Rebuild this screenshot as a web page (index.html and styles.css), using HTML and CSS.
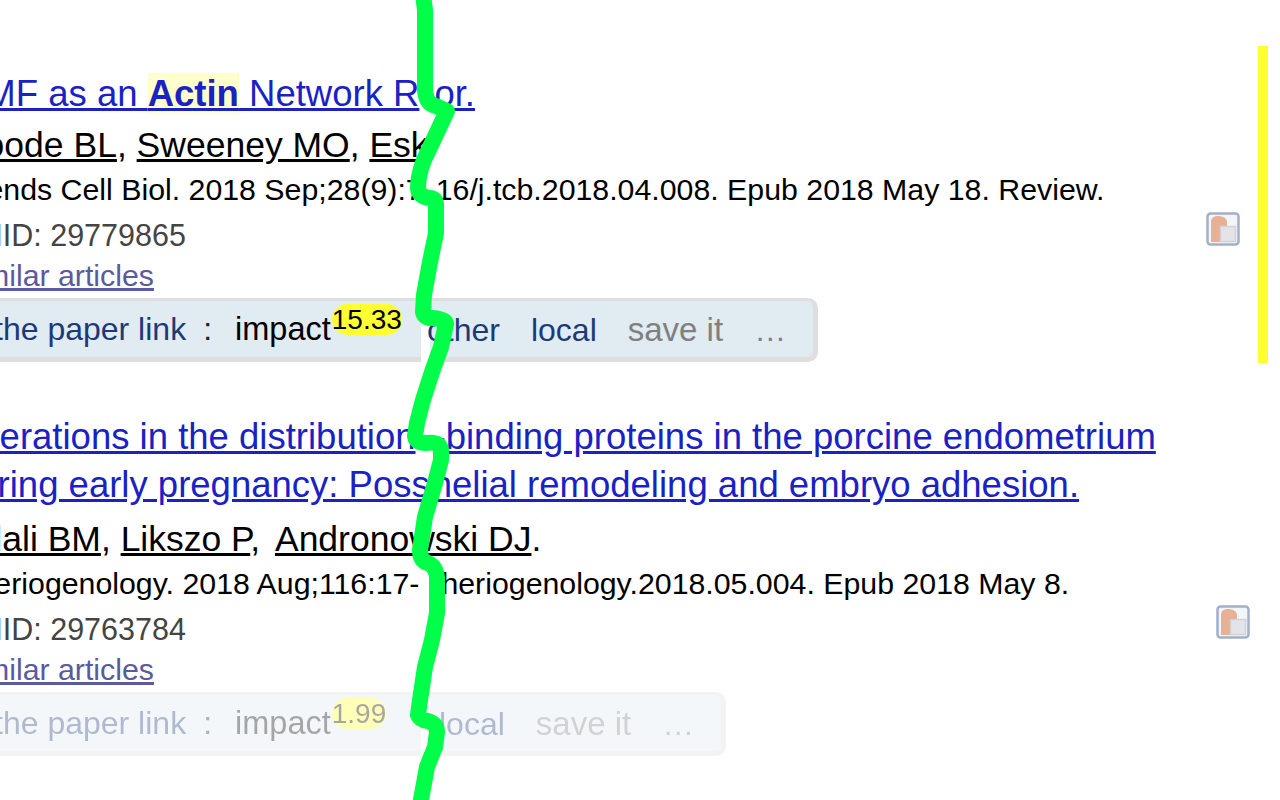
FILE: index.html
```html
<!DOCTYPE html>
<html lang="en">
<head>
    <meta charset="UTF-8">
    <title>Search results</title>
    <link rel="stylesheet" href="styles.css">
</head>
<body>
    <div class="results">
        <div class="article flagged">
            <div class="docsum">
                <p class="title"><a href="#">RMF as an <b class="hit">Actin</b> Network R<span class="cut-f">or.</span></a></p>
                <p class="authors"><a href="#">Goode BL</a>, <a href="#">Sweeney MO</a>, <a href="#">Esk</a></p>
                <p class="journal">Trends Cell Biol. 2018 Sep;28(9):7<span class="cut-a">16/j.tcb.2018.04.008. Epub 2018 May 18. Review.</span></p>
                <p class="pmid">PMID: 29779865</p>
                <p class="similar"><a href="#">Similar articles</a></p>
                <div class="toolbar">
                    <div class="bar-left">
                        <span class="link">the paper link</span>
                        <span class="sep">:</span>
                        <span class="impact">impact<sup class="score">15.33</sup></span>
                    </div>
                    <div class="bar-right">
                        <span class="link">other</span>
                        <span class="link">local</span>
                        <span class="save">save it</span>
                        <span class="more">…</span>
                    </div>
                </div>
            </div>
            <div class="side">
                <svg class="clip-icon" viewBox="0 0 34 34">
                    <rect x="1.5" y="1.5" width="31" height="31" rx="3" fill="#f4f5f8" stroke="#a3b0c8" stroke-width="2.5"/>
                    <path d="M5 30V10c0-4 3-6 7-6s9 2 9 6v20z" fill="#e6b194"/>
                    <rect x="14.500" y="14.500" width="15" height="15" fill="#e4e4e8" stroke="#cfd2d8" stroke-width="1.500"/>
                </svg>
            </div>
        </div>
        <div class="article faded">
            <div class="docsum">
                <p class="title"><a href="#">Alterations in the distribution<span class="cut-b">-binding proteins in the porcine endometrium</span></a></p>
                <p class="title"><a href="#">during early pregnancy: Poss<span class="cut-c">helial remodeling and embryo adhesion.</span></a></p>
                <p class="authors"><a href="#">Wdali BM</a>, <a href="#">Likszo P</a>, <a class="cut-e" href="#">Andronowski DJ</a>.</p>
                <p class="journal">Theriogenology. 2018 Aug;116:17-<span class="cut-d">heriogenology.2018.05.004. Epub 2018 May 8.</span></p>
                <p class="pmid">PMID: 29763784</p>
                <p class="similar"><a href="#">Similar articles</a></p>
                <div class="toolbar">
                    <div class="bar-left">
                        <span class="link">the paper link</span>
                        <span class="sep">:</span>
                        <span class="impact">impact<sup class="score">1.99</sup></span>
                    </div>
                    <div class="bar-right">
                        <span class="link">local</span>
                        <span class="save">save it</span>
                        <span class="more">…</span>
                    </div>
                </div>
            </div>
            <div class="side">
                <svg class="clip-icon" viewBox="0 0 34 34">
                    <rect x="1.5" y="1.5" width="31" height="31" rx="3" fill="#f4f5f8" stroke="#a3b0c8" stroke-width="2.5"/>
                    <path d="M5 30V10c0-4 3-6 7-6s9 2 9 6v20z" fill="#e6b194"/>
                    <rect x="14.500" y="14.500" width="15" height="15" fill="#e4e4e8" stroke="#cfd2d8" stroke-width="1.500"/>
                </svg>
            </div>
        </div>
    </div>

    <svg class="scribble" viewBox="0 0 1280 800">
        <path d="M423 -5 L425 10 L425 90 Q426 104 436 106 L447 111 L424 160 Q418 175 418 188 Q419 197 430 198 Q436 198 436 205 L436 233 L430 262 L424 295 L423 312 Q424 318 432 318 Q446 319 446 324 L441 347 L432 372 L423 400 L417 423 L415 436 Q416 443 426 443 Q440 441 441 450 L441 460 L435 483 L425 517 L420 550 Q420 561 428 563 Q436 566 437 578 L437 613 L432 640 L425 667 L420 700 L418 715 Q420 720 428 721 Q437 724 437 732 L435 747 L427 767 L420 805"/>
    </svg>
</body>
</html>
```
FILE: styles.css
```css
html, body {
    margin: 0;
    height: 800px;
    overflow: hidden;
    background-color: #fff;
}
body {
    font-family: "Liberation Sans", Arial, sans-serif;
    color: #000;
}
p {
    margin: 0;
    white-space: nowrap;
}
.results {
    padding-top: 46px;
    width: 1268px;
}
.article {
    display: flex;
    justify-content: space-between;
}
.flagged {
    height: 317px;
    border-right: 10px solid #ffff33;
}
.faded {
    margin-top: 50px;
}
.docsum {
    margin-left: -43px;
    min-width: 0;
}
.flagged .docsum {
    padding-top: 24px;
}
.side {
    padding-right: 18px;
}
.flagged .side {
    padding-top: 166px;
}
.faded .side {
    padding-top: 192px;
}
.clip-icon {
    display: block;
    width: 34px;
    height: 34px;
    filter: blur(0.6px);
}
.title {
    font-size: 36.5px;
    line-height: 48px;
}
.flagged .title {
    margin-left: 2px;
}
.title a {
    color: #1a22c4;
}
.hit {
    background-color: #ffffcc;
}
.authors {
    font-size: 35.5px;
    line-height: 48px;
    margin-top: 3px;
}
.faded .authors {
    margin-top: 6px;
    margin-left: -8px;
}
.authors a {
    color: #000;
}
.journal {
    font-size: 30.3px;
    line-height: 42px;
    margin-left: 2px;
}
.pmid {
    font-size: 30.5px;
    line-height: 48px;
    color: #444;
}
.similar {
    font-size: 30.3px;
    line-height: 34px;
}
.similar a {
    color: #5a5a9e;
}
/* gaps where the page is torn along the green line */
.cut-a {
    margin-left: 13px;
}
.cut-b {
    margin-left: 18px;
}
.cut-c {
    margin-left: 2px;
}
.cut-d {
    margin-left: 22px;
}
.cut-e {
    margin-left: 5px;
}
.cut-f {
    margin-left: 15px;
}
.toolbar {
    display: flex;
    gap: 9px;
    margin-top: 5px;
    height: 64px;
    font-size: 32px;
    width: max-content;
}
.bar-left, .bar-right {
    display: flex;
    align-items: baseline;
    padding-top: 10px;
    background-color: #e1ebf2;
    border: solid #dedede;
    border-width: 3px 0 5px;
    box-sizing: border-box;
    white-space: nowrap;
}
.bar-left {
    width: 464px;
    padding-left: 37px;
    border-radius: 8px 0 0 8px;
}
.bar-right {
    gap: 31px;
    padding-right: 27px;
    border-right-width: 5px;
    border-radius: 0 10px 10px 0;
}
.link {
    color: #1c3a78;
}
.bar-right .link:first-child {
    margin-left: -3px;
}
.faded .bar-right .link:first-child {
    margin-left: 9px;
}
.sep {
    margin: 0 23px 0 17px;
    color: #222;
}
.impact {
    font-size: 32.5px;
    color: #000;
}
.save {
    font-size: 33px;
    color: #808080;
}
.more {
    color: #808080;
}
.score {
    display: inline-block;
    font-size: 28px;
    line-height: 31px;
    margin-left: 1px;
    vertical-align: baseline;
    background-color: #ffff33;
    border-radius: 15px;
    transform: translateY(-11px);
}
.faded .toolbar {
    opacity: 0.35;
}
.scribble {
    position: absolute;
    left: 0;
    top: 0;
    width: 1280px;
    height: 800px;
    fill: none;
    stroke: #00ff48;
    stroke-width: 16;
    stroke-linejoin: round;
    stroke-linecap: round;
}
```
